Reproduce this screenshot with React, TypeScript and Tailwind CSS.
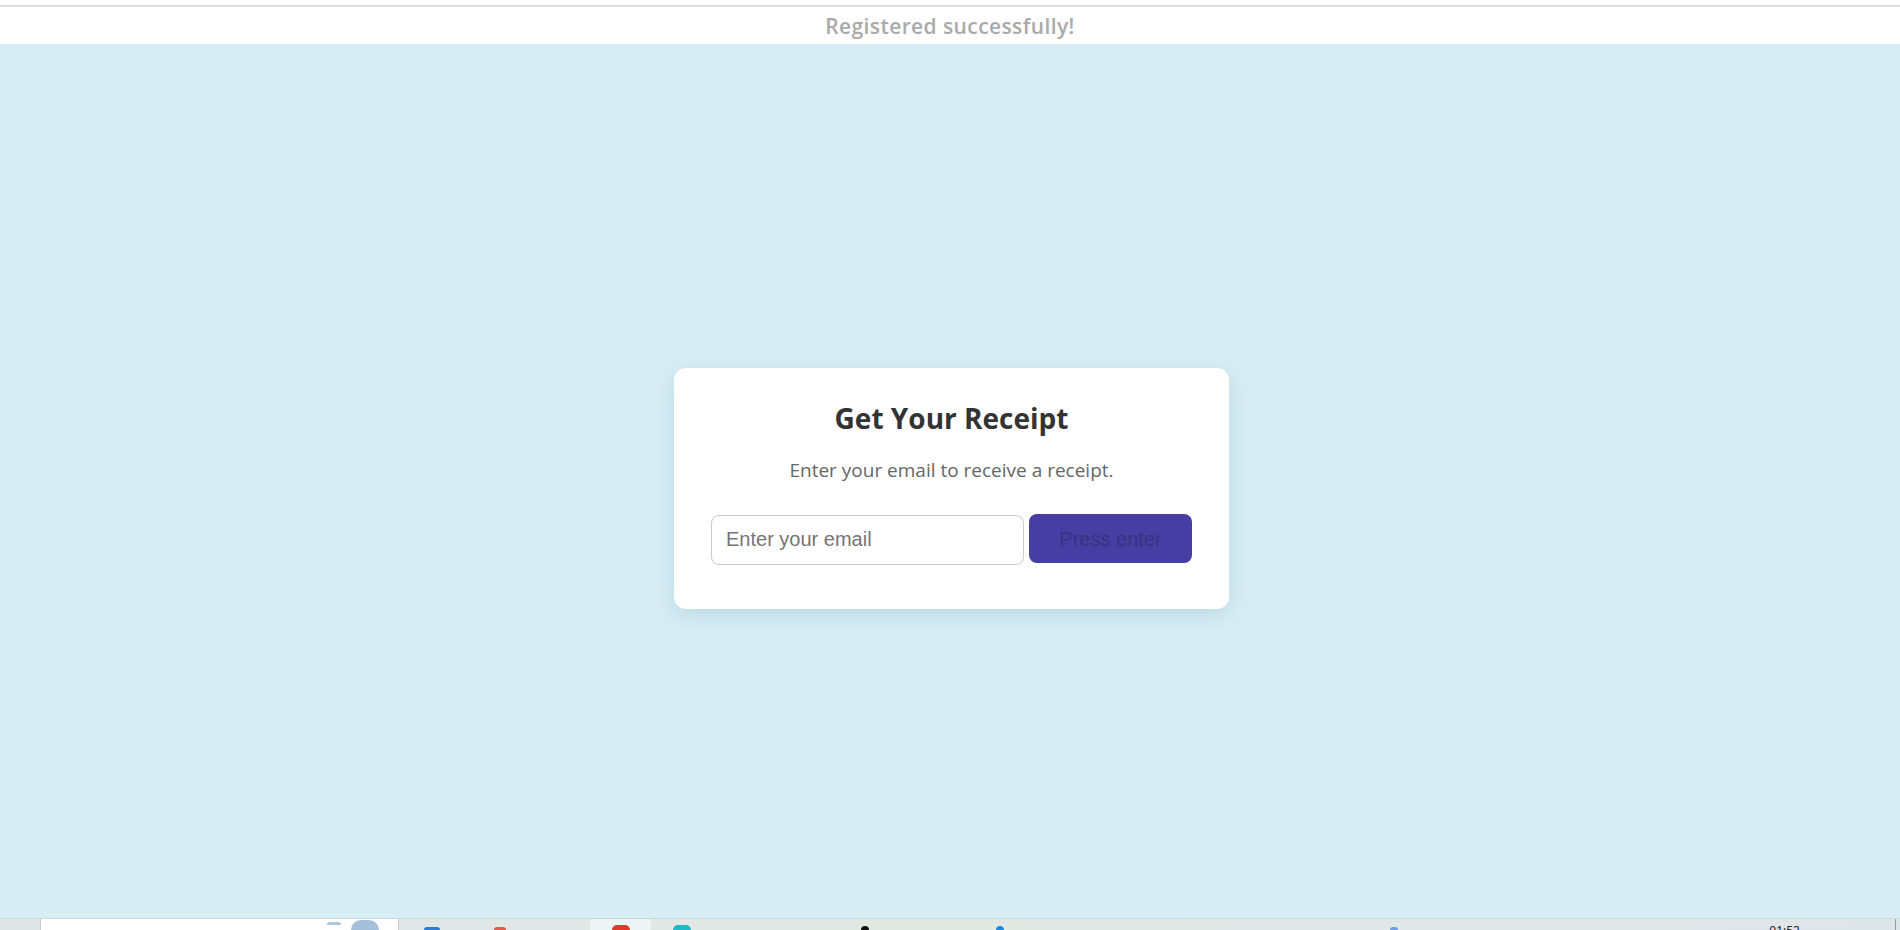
import React from "react";

function Stub({ color, w, h }: { color: string; w: string; h: string }) {
  return <div className={`${w} ${h} ${color} rounded-t-full self-end`} />;
}

export default function App() {
  return (
    <div className="relative h-[930px] w-full overflow-hidden flex flex-col bg-white font-['Open_Sans',sans-serif]">
      <div className="h-[5px] bg-white" />
      <div className="h-[2px] bg-[#dcdcdc]" />
      <div className="h-[37px] bg-white flex items-center justify-center">
        <span className="text-[21px] tracking-[0.4px] font-semibold text-[#aaaaaa] leading-[26px]">Registered successfully!</span>
      </div>
      <main className="flex-1 bg-[#d8eef6] flex items-center justify-center">
        <div className="w-[555px] ml-[3px] mt-[2px] bg-white rounded-[12px] px-[37px] pt-[33px] pb-[44px] shadow-[0_6px_22px_rgba(60,110,140,0.18)] flex flex-col items-center">
          <h2 className="text-[28px] leading-[35px] font-bold text-[#333333] m-0">Get Your Receipt</h2>
          <p className="mt-[22px] text-[19px] leading-[24px] text-[#666666]">Enter your email to receive a receipt.</p>
          <div className="mt-[33px] w-full flex items-center gap-[5px]">
            <input
              type="email"
              placeholder="Enter your email"
              className="w-[313px] h-[50px] border border-[#cccccc] rounded-[8px] px-[14px] text-[20px] font-['Liberation_Sans',Arial,sans-serif] placeholder:text-[#757575] outline-none"
            />
            <button className="w-[163px] h-[49px] -mt-[2px] rounded-[8px] bg-[#473ea3] text-[#39327e] text-[20px] font-['Liberation_Sans',Arial,sans-serif]">
              Press enter
            </button>
          </div>
        </div>
      </main>
      {/* partial OS taskbar at the bottom edge (overlays the page) */}
      <div className="absolute bottom-0 left-0 w-full h-[12px] bg-gradient-to-r from-[#dfe6e8] via-[#e2e8e4] to-[#dde6ea] border-t border-[#d0d6d8] flex items-stretch pl-[40px] pr-[4px]">
        <div className="w-[359px] bg-white border-x border-[#c8c8c8] flex items-end justify-end gap-[10px] pr-[19px]">
          <div className="w-[14px] h-[3px] rounded-t-full bg-[#a9c8dc] mb-[5px]" />
          <div className="w-[28px] h-[10px] rounded-t-full bg-[#a6c0dc]" />
        </div>
        <div className="flex items-end gap-[54px] pl-[25px]">
          <Stub color="bg-[#2d7cd6]" w="w-[16px]" h="h-[3px]" />
          <Stub color="bg-[#e25b4b]" w="w-[12px]" h="h-[3px]" />
        </div>
        <div className="ml-[84px] w-[61px] bg-[#eef3f6] flex items-end justify-center">
          <Stub color="bg-[#e0392b]" w="w-[18px]" h="h-[5px]" />
        </div>
        <div className="flex items-end pl-[22px]">
          <Stub color="bg-[#1fb9c9]" w="w-[18px]" h="h-[5px]" />
        </div>
        <div className="flex items-end gap-[127px] pl-[170px]">
          <Stub color="bg-[#111111]" w="w-[8px]" h="h-[4px]" />
          <Stub color="bg-[#1e88e5]" w="w-[8px]" h="h-[4px]" />
        </div>
        <div className="flex items-end pl-[386px]">
          <Stub color="bg-[#6f9ce6]" w="w-[8px]" h="h-[3px]" />
        </div>
        <div className="flex-1" />
        <div className="pt-[5px] pr-[95px] text-[12px] leading-[14px] text-[#222222] font-['Noto_Sans',sans-serif]">01:52</div>
        <div className="w-[1px] bg-[#9a9a9a]" />
      </div>
    </div>
  );
}
